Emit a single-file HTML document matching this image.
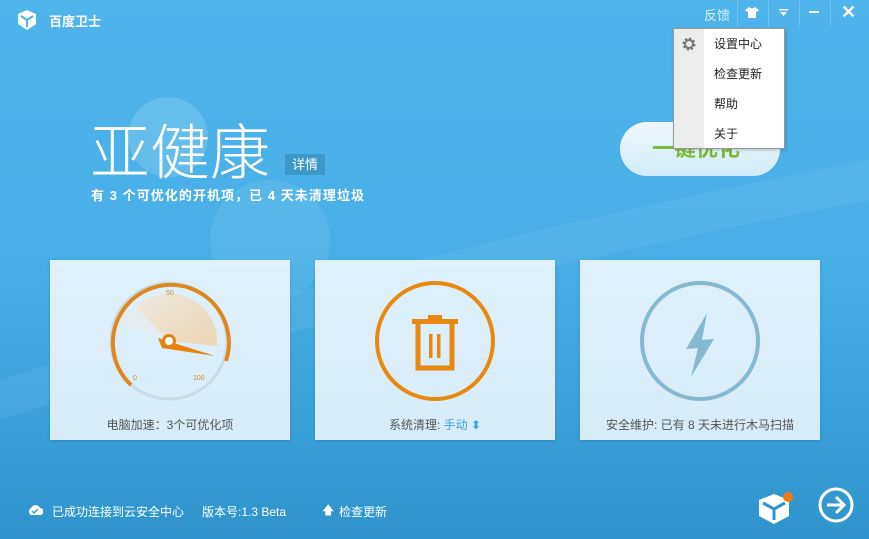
<!DOCTYPE html>
<html><head><meta charset="utf-8"><style>
*{margin:0;padding:0;box-sizing:border-box}
body{width:869px;height:539px;overflow:hidden;font-family:"Liberation Sans","Noto Sans CJK SC",sans-serif;position:relative;background:linear-gradient(180deg,#4db5ea 0%,#48b0e6 45%,#3aa2d9 75%,#2e94cb 100%)}
.a{position:absolute}
.card{position:absolute;top:260px;width:240px;height:180px;background:linear-gradient(180deg,#dff1fb,#d7ecf8);box-shadow:0 1px 3px rgba(0,0,0,.15)}
.card .t{position:absolute;left:0;right:0;top:156px;text-align:center;font-size:12px;color:#555}
.menu div{height:30px;line-height:30px;padding-left:40px;font-size:12px;color:#222}
</style></head><body>
<div class="a" style="left:128px;top:97px;width:80px;height:80px;border-radius:50%;background:rgba(255,255,255,.15)"></div>
<div class="a" style="left:210px;top:180px;width:120px;height:120px;border-radius:50%;background:rgba(255,255,255,.08)"></div>
<svg class="a" style="left:0;top:0" width="869" height="539"><path d="M0 380 Q400 250 869 160 L869 200 Q400 290 0 420Z" fill="rgba(255,255,255,.06)"/></svg>
<svg class="a" style="left:16px;top:9px" width="22" height="22" viewBox="0 0 22 22"><path d="M11 1 L20 5 L20 15 L11 21 L2 15 L2 5Z" fill="#fff"/><path d="M5 7 L11 11 L17 7" stroke="#4ab3e8" stroke-width="2" fill="none"/><path d="M11 11 V18" stroke="#4ab3e8" stroke-width="2"/></svg>
<div class="a" style="left:49px;top:11px;color:#fff;font-size:13px;font-weight:bold">百度卫士</div>
<div class="a" style="left:704px;top:5px;color:#d9f0fc;font-size:13px">反馈</div>
<div class="a" style="left:737px;top:0;width:1px;height:26px;background:rgba(255,255,255,.2)"></div>
<div class="a" style="left:768px;top:0;width:1px;height:26px;background:rgba(255,255,255,.2)"></div>
<div class="a" style="left:799px;top:0;width:1px;height:26px;background:rgba(255,255,255,.2)"></div>
<div class="a" style="left:830px;top:0;width:1px;height:26px;background:rgba(255,255,255,.2)"></div>
<svg class="a" style="left:745px;top:7px" width="14" height="11"><path d="M4 0 L0 3 L2 5 L3 4 L3 11 L11 11 L11 4 L12 5 L14 3 L10 0 Q7 3 4 0Z" fill="#fff"/></svg>
<svg class="a" style="left:779px;top:9px" width="9" height="8"><rect x="0" y="0" width="9" height="1.5" fill="#fff"/><path d="M1 3 L8 3 L4.5 7Z" fill="#fff"/></svg>
<div class="a" style="left:809px;top:11px;width:10px;height:2px;background:#fff"></div>
<div class="a" style="left:841px;top:2px;color:#fff;font-size:18px;font-weight:bold">✕</div>
<div class="a" style="left:90px;top:114px;color:#fff;font-size:60px;line-height:70px;font-family:'Noto Sans CJK SC',sans-serif;font-weight:300">亚健康</div>
<div class="a" style="left:285px;top:154px;width:40px;height:21px;background:#3d98c8;color:#fff;font-size:13px;line-height:21px;text-align:center">详情</div>
<div class="a" style="left:280px;top:160px;width:0;height:0;border:5px solid transparent;border-right-color:#3d98c8"></div>
<div class="a" style="left:91px;top:185px;color:#fff;font-size:13px;font-weight:bold;letter-spacing:1.05px">有 3 个可优化的开机项，已 4 天未清理垃圾</div>
<div class="a" style="left:620px;top:122px;width:160px;height:54px;border-radius:27px;background:linear-gradient(180deg,#eef8fd,#d3ebf8);color:#7cb83a;font-size:22px;font-weight:bold;line-height:54px;padding-left:32px">一键优化</div>
<div class="a menu" style="left:673px;top:28px;width:112px;height:121px;background:#fff;border:1px solid #999;box-shadow:1px 1px 3px rgba(0,0,0,.2)"><div class="a" style="left:0;top:0;width:30px;height:119px;background:#ececec;padding:0"></div>
<div style="position:relative">设置中心</div><div style="position:relative">检查更新</div><div style="position:relative">帮助</div><div style="position:relative">关于</div>
<svg class="a" style="left:7px;top:7px" width="16" height="16" viewBox="0 0 16 16"><circle cx="8" cy="8" r="5" fill="none" stroke="#777" stroke-width="3" stroke-dasharray="2.2 1.7"/><circle cx="8" cy="8" r="4" fill="none" stroke="#777" stroke-width="2"/></svg></div>

<div class="card" style="left:50px">
<svg class="a" style="left:0;top:0" width="240" height="150">
<defs><linearGradient id="g" x1="0" y1="0" x2="1" y2="1"><stop offset="0" stop-color="#ece8df"/><stop offset="1" stop-color="#ecd5b4"/></linearGradient></defs>
<path d="M119 81 L86 47 A48 48 0 0 1 167 86Z" fill="url(#g)"/>
<path d="M119 81 L70 60 A48 48 0 0 1 86 47Z" fill="#e8eae8" opacity=".7"/>
<circle cx="119" cy="81" r="58" fill="none" stroke="#c9dbe2" stroke-width="3"/>
<path d="M81 125 A58 58 0 1 1 176 101" fill="none" stroke="#e0861f" stroke-width="4"/>
<path d="M108 78 L165 96 L112 88Z" fill="#e8820c"/>
<circle cx="119" cy="81" r="7" fill="#e8820c"/><circle cx="119" cy="81" r="4" fill="#fff"/>
<text x="116" y="35" font-size="7" fill="#d08a2a">50</text><text x="83" y="120" font-size="7" fill="#d08a2a">0</text><text x="143" y="120" font-size="7" fill="#d08a2a">100</text>
</svg>
<div class="t">电脑加速：3个可优化项</div></div>

<div class="card" style="left:315px">
<svg class="a" style="left:0;top:0" width="240" height="150"><circle cx="120" cy="81" r="58" fill="none" stroke="#e8880f" stroke-width="4"/>
<rect x="97" y="59" width="46" height="5" fill="#e8880f"/><rect x="113" y="55" width="14" height="5" fill="#e8880f"/>
<path d="M103 64 V108 H137 V64" fill="none" stroke="#e8880f" stroke-width="5"/>
<rect x="114" y="74" width="3.5" height="24" fill="#e8880f"/><rect x="122" y="74" width="3.5" height="24" fill="#e8880f"/></svg>
<div class="t">系统清理: <span style="color:#3ca3dc">手动 ⬍</span></div></div>

<div class="card" style="left:580px">
<svg class="a" style="left:0;top:0" width="240" height="150"><circle cx="120" cy="81" r="58" fill="none" stroke="#85b8d1" stroke-width="4"/>
<path d="M127 53 L106 89 L118 88 L111 117 L134 79 L122 80Z" fill="#85b8d1"/></svg>
<div class="t">安全维护: 已有 8 天未进行木马扫描</div></div>

<svg class="a" style="left:27px;top:503px" width="16" height="13"><path d="M4 12 A4 4 0 0 1 4 5 A5 5 0 0 1 13 5 A3.5 3.5 0 0 1 13 12Z" fill="#fff"/><path d="M5 8 L7 10 L11 6" stroke="#3a9fd3" stroke-width="1.5" fill="none"/></svg>
<div class="a" style="left:52px;top:503px;color:#fff;font-size:12px">已成功连接到云安全中心</div>
<div class="a" style="left:202px;top:503px;color:#fff;font-size:12px">版本号:1.3 Beta</div>
<div class="a" style="left:322px;top:501px;color:#fff;font-size:12px">🡅</div>
<div class="a" style="left:339px;top:503px;color:#fff;font-size:12px">检查更新</div>
<svg class="a" style="left:757px;top:490px" width="38" height="36" viewBox="0 0 38 36"><path d="M17 4 L32 10 L32 26 L17 34 L2 26 L2 10Z" fill="#fff"/><path d="M6 13 L17 19 L28 13" stroke="#2e94cb" stroke-width="3" fill="none"/><path d="M17 19 V30" stroke="#2e94cb" stroke-width="3"/><circle cx="31" cy="7" r="5" fill="#f07a10"/></svg>
<svg class="a" style="left:817px;top:486px" width="38" height="38"><circle cx="19" cy="19" r="16" fill="none" stroke="#fff" stroke-width="3"/><path d="M10 19 H26 M19 11 L27 19 L19 27" stroke="#fff" stroke-width="3" fill="none"/></svg>
</body></html>
